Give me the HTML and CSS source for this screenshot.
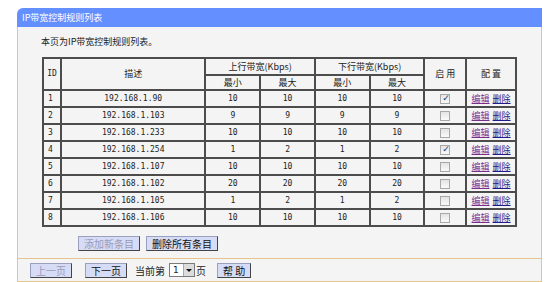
FILE: index.html
```html
<!DOCTYPE html>
<html lang="zh-CN">
<head>
  <meta charset="UTF-8" />
  <title>IP带宽控制规则列表</title>
  <link rel="stylesheet" href="styles.css">
</head>
<body>

  <div class="panel">
    <div class="panel-title">IP带宽控制规则列表</div>

    <div class="panel-body">
      <p class="intro">本页为IP带宽控制规则列表。</p>

      <table class="rules">
        <tr class="head">
          <th rowspan="2" class="col-id num">ID</th>
          <th rowspan="2" class="col-desc">描述</th>
          <th colspan="2">上行带宽(Kbps)</th>
          <th colspan="2">下行带宽(Kbps)</th>
          <th rowspan="2" class="col-on">启 用</th>
          <th rowspan="2" class="col-cfg">配 置</th>
        </tr>
        <tr class="head2">
          <th class="col-bw">最小</th>
          <th class="col-bw">最大</th>
          <th class="col-bw">最小</th>
          <th class="col-bw">最大</th>
        </tr>
        <tr>
          <td class="num left">1</td><td class="num">192.168.1.90</td>
          <td class="num">10</td><td class="num">10</td><td class="num">10</td><td class="num">10</td>
          <td><span class="check on"></span></td>
          <td><a class="edit" href="#">编辑</a> <a class="del" href="#">删除</a></td>
        </tr>
        <tr>
          <td class="num left">2</td><td class="num">192.168.1.103</td>
          <td class="num">9</td><td class="num">9</td><td class="num">9</td><td class="num">9</td>
          <td><span class="check"></span></td>
          <td><a class="edit" href="#">编辑</a> <a class="del" href="#">删除</a></td>
        </tr>
        <tr>
          <td class="num left">3</td><td class="num">192.168.1.233</td>
          <td class="num">10</td><td class="num">10</td><td class="num">10</td><td class="num">10</td>
          <td><span class="check"></span></td>
          <td><a class="edit" href="#">编辑</a> <a class="del" href="#">删除</a></td>
        </tr>
        <tr>
          <td class="num left">4</td><td class="num">192.168.1.254</td>
          <td class="num">1</td><td class="num">2</td><td class="num">1</td><td class="num">2</td>
          <td><span class="check on"></span></td>
          <td><a class="edit" href="#">编辑</a> <a class="del" href="#">删除</a></td>
        </tr>
        <tr>
          <td class="num left">5</td><td class="num">192.168.1.107</td>
          <td class="num">10</td><td class="num">10</td><td class="num">10</td><td class="num">10</td>
          <td><span class="check"></span></td>
          <td><a class="edit" href="#">编辑</a> <a class="del" href="#">删除</a></td>
        </tr>
        <tr>
          <td class="num left">6</td><td class="num">192.168.1.102</td>
          <td class="num">20</td><td class="num">20</td><td class="num">20</td><td class="num">20</td>
          <td><span class="check"></span></td>
          <td><a class="edit" href="#">编辑</a> <a class="del" href="#">删除</a></td>
        </tr>
        <tr>
          <td class="num left">7</td><td class="num">192.168.1.105</td>
          <td class="num">1</td><td class="num">2</td><td class="num">1</td><td class="num">2</td>
          <td><span class="check"></span></td>
          <td><a class="edit" href="#">编辑</a> <a class="del" href="#">删除</a></td>
        </tr>
        <tr>
          <td class="num left">8</td><td class="num">192.168.1.106</td>
          <td class="num">10</td><td class="num">10</td><td class="num">10</td><td class="num">10</td>
          <td><span class="check"></span></td>
          <td><a class="edit" href="#">编辑</a> <a class="del" href="#">删除</a></td>
        </tr>
      </table>

      <div class="actions">
        <button class="btn" disabled>添加新条目</button>
        <button class="btn">删除所有条目</button>
      </div>
    </div>

    <div class="panel-foot">
      <button class="btn" disabled>上一页</button>
      <button class="btn next">下一页</button>
      <span class="page-label">当前第</span>
      <span class="select"><span class="select-val">1</span><span class="select-arrow"></span></span>
      <span class="page-unit">页</span>
      <button class="btn help">帮 助</button>
    </div>
  </div>

</body>
</html>
```

FILE: styles.css
```css
body {
  margin: 0;
  padding: 8px 4px 0 17px;
  background-color: #fff;
  font-family: "Noto Sans CJK SC", "DejaVu Sans", sans-serif;
  font-size: 9px;
  color: #222;
}

.panel {
  width: 525px;
}

.panel-title {
  height: 19px;
  line-height: 19px;
  padding-left: 5px;
  background-color: #6490ff;
  border-top-left-radius: 6px;
  color: #fff;
  font-size: 9px;
}

.panel-body {
  background-color: #f4f4f4;
  border-left: 1px solid #e6c48e;
  border-right: 1px solid #e6c48e;
  border-bottom: 1px solid #e6c48e;
  padding: 9px 0 7px 23px;
}

.intro {
  margin: 0 0 9px 0;
  line-height: 12px;
}

.rules {
  border-collapse: collapse;
  margin-left: 1px;
  width: 475px;
}

.rules th,
.rules td {
  border: 2px solid #4c4c4c;
  padding: 0;
  text-align: center;
  font-weight: normal;
  line-height: 12px;
}

.rules tr {
  height: 17px;
}

.rules tr.head2 {
  height: 15px;
}

.col-id { width: 16px; }
.col-desc { width: 143px; }
.col-bw { width: 53px; }
.col-on { width: 40px; }
.col-cfg { width: 48px; }

.num {
  font-family: "DejaVu Sans Mono", monospace;
  font-size: 8px;
}

.num.left {
  text-align: left;
  padding-left: 4px;
}

.check {
  display: inline-block;
  width: 8px;
  height: 8px;
  border: 1px solid #a8a8a8;
  background: linear-gradient(#e4e4e4, #fafafa);
  vertical-align: middle;
  position: relative;
}

.check.on::after {
  content: "✓";
  position: absolute;
  left: 1px;
  top: -3px;
  font-size: 9px;
  color: #2a3a6a;
  font-family: "DejaVu Sans", sans-serif;
}

.rules a {
  font-size: 9px;
  text-decoration: underline;
}

.edit { color: #7a2f8c; }
.del { color: #1c1c8a; margin-left: 1px; }

.actions {
  padding: 9px 0 0 37px;
}

.btn {
  font-family: "Noto Sans CJK SC", sans-serif;
  font-size: 10px;
  line-height: 11px;
  padding: 1px 5px;
  margin: 0 4px 0 0;
  background-color: #d6dcf6;
  border: 1px solid #555;
  border-color: #9aa0c0 #444 #444 #9aa0c0;
  color: #111;
  border-radius: 0;
}

.btn:disabled {
  color: #9a9ab4;
}

.panel-foot {
  background-color: #f4f4f4;
  border-left: 1px solid #e6c48e;
  border-right: 1px solid #e6c48e;
  border-bottom: 1px solid #e6c48e;
  padding: 4px 0 4px 12px;
  display: flex;
  align-items: center;
  height: 14px;
}

.panel-foot .next {
  margin-left: 9px;
}

.page-label {
  margin-left: 4px;
  font-size: 10px;
}

.select {
  display: inline-flex;
  margin-left: 4px;
  width: 24px;
  height: 12px;
  border: 1px solid #7a7a7a;
  background-color: #fff;
}

.select-val {
  flex: 1;
  font-size: 9px;
  line-height: 12px;
  padding-left: 3px;
  font-family: "DejaVu Sans", sans-serif;
}

.select-arrow {
  width: 10px;
  background-color: #dcdcdc;
  border-left: 1px solid #aaa;
  position: relative;
}

.select-arrow::after {
  content: "";
  position: absolute;
  left: 2px;
  top: 5px;
  border-left: 3px solid transparent;
  border-right: 3px solid transparent;
  border-top: 3px solid #111;
}

.page-unit {
  margin-left: 1px;
  font-size: 10px;
}

.panel-foot .help {
  margin-left: 11px;
}
```
